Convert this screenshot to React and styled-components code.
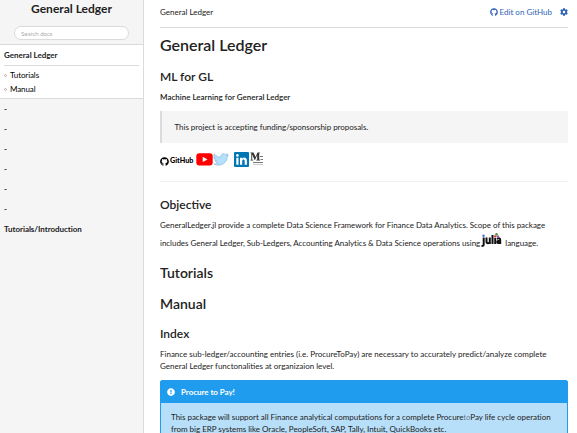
import React from 'react';
import styled, { createGlobalStyle } from 'styled-components';
import { FaCog, FaGithub, FaExclamationCircle } from 'react-icons/fa';

const GlobalStyle = createGlobalStyle`
  *, *::before { box-sizing: border-box; }
  body { margin: 0; overflow: hidden; background: #fff; }
`;

const Page = styled.div`
  display: flex;
  width: 577px;
  height: 433px;
  overflow: hidden;
  font: 400 8px/12px Lato, sans-serif;
  color: #222;
`;

const Sidebar = styled.aside`
  width: 144px;
  flex: none;
  background: #f5f5f5;
  border-right: 1px solid #dbdbdb;
`;

const SiteTitle = styled.div`
  height: 19px;
  line-height: 18px;
  font-size: 12px;
  font-weight: 700;
  text-align: center;
`;

const Search = styled.input`
  display: block;
  width: 115px;
  height: 14px;
  margin: 7px 0 4px 14px;
  padding: 0 6px;
  border: 1px solid #dbdbdb;
  border-radius: 7px;
  background: #fff;
  font: 400 6px/12px Lato, sans-serif;
  outline: none;
  &::placeholder { color: #aaa; opacity: 1; }
`;

const CurrentSection = styled.nav`
  height: 55px;
  padding: 0 4px;
  background: #fff;
  border-top: 1px solid #dbdbdb;
  border-bottom: 1px solid #dbdbdb;
`;

const SectionName = styled.div`
  height: 21px;
  line-height: 21px;
  border-bottom: 1px solid #dbdbdb;
  font-weight: 700;
  letter-spacing: -0.03px;
  margin-bottom: 2px;
`;

const SubLink = styled.div`
  display: flex;
  align-items: center;
  height: 14px;
  gap: 3px;
  color: #000;
  letter-spacing: -0.1px;
  &::before {
    content: '';
    width: 3px;
    height: 3px;
    border: 1px solid #c9a9a4;
    border-radius: 50%;
  }
`;

const MenuItem = styled.div`
  height: 20px;
  line-height: 20px;
  padding-left: 4px;
  font-weight: 700;
  letter-spacing: -0.04px;
`;

const Main = styled.main`
  width: 408px;
  margin-left: 16px;
`;

const TopBar = styled.header`
  display: flex;
  justify-content: space-between;
  align-items: center;
  height: 28px;
  padding-bottom: 3px;
  border-bottom: 1px solid #dbdbdb;
`;

const Actions = styled.div`
  display: flex;
  align-items: center;
  color: #2e63b8;
  svg:last-child { margin-left: 8px; }
  svg:first-child { margin-right: 2px; }
`;

const Heading = styled.h2`
  margin: 0;
  height: ${p => p.$h}px;
  line-height: ${p => p.$lh || p.$h}px;
  font-size: ${p => p.$size}px;
  font-weight: 600;
`;

const Quote = styled.blockquote`
  height: 32px;
  margin: 4px 0 0;
  padding-left: 12.5px;
  line-height: 33px;
  letter-spacing: -0.04px;
  background: #f5f5f5;
  border-left: 2px solid #dbdbdb;
`;

const Badges = styled.div`
  display: flex;
  align-items: center;
  height: 39px;
  padding-bottom: 6px;
  border-bottom: 1px solid #f0f0f0;
  svg { flex: none; }
`;

const GithubMark = styled.span`
  display: flex;
  align-items: center;
  gap: 1px;
  width: 36px;
  padding-top: 4px;
  color: #000;
  font-weight: 900;
  font-size: 7.2px;
`;

const LinkedInLink = styled.span`
  display: flex;
  margin: 0 1px 0 5px;
`;

const Line = styled.div`
  height: ${p => p.$h || 12}px;
  line-height: ${p => p.$h || 12}px;
  letter-spacing: ${p => p.$track || 0}px;
  white-space: nowrap;
  svg { margin: 0 1px 0 1px; vertical-align: -1px; }
  em { font-style: italic; font-weight: 300; }
`;

const Admonition = styled.section`
  height: 80px;
  margin-top: 8px;
  background: #b8dff9;
  border: 1px solid #209cee;
  border-radius: 2px;
`;

const AdmonitionHead = styled.div`
  display: flex;
  align-items: center;
  height: 22px;
  gap: 6px;
  padding-left: 6px;
  background: #209cee;
  color: #fff;
  font-weight: 700;
  letter-spacing: -0.05px;
`;

const AdmonitionBody = styled.div`
  padding: 8px 10px;
`;

const YouTube = () => (
  <svg width="17" height="13" viewBox="0 0 17 13">
    <rect x="0.3" y="0.3" width="16.4" height="12.2" rx="3" fill="#f00" />
    <path d="M6.7 3.7v5.4l4.8-2.7z" fill="#fff" />
  </svg>
);

const Twitter = () => (
  <svg width="16" height="13" viewBox="0 0 24 20">
    <path d="M1.500 1.500C4 4.500 7.500 6.300 11.800 6.500 11 1.500 16 -.5 19.200 2.500L22.500 1.300 21 3.800l2.500-.4L21.500 6C21.500 15 12 22 1 17c3 0 5-.5 6.500-2-2.500 0-4-1.500-4.500-3.500h2C2.500 10.500 1 9 1 6.500l2 .7C.8 5.500.5 3.500 1.500 1.500z" fill="#b5e0fb" stroke="#86b9d8" strokeWidth="1" />
  </svg>
);

const LinkedIn = () => (
  <svg width="15" height="15" viewBox="0 0 15 15">
    <rect width="15" height="15" rx="1" fill="#0077b5" />
    <path d="M2.300 5.700h2.200v7H2.300zM6 5.700h2v1c1.200-2 4.900-1.500 4.900 2v4h-2.200V9.300c0-2.500-2.500-2.300-2.500 0v3.400H6z" fill="#fff" />
    <circle cx="3.400" cy="3.400" r="1.300" fill="#fff" />
  </svg>
);

const Medium = () => (
  <svg width="13" height="14" viewBox="0 0 13 14">
    <path d="M0.500 0.500h3L5.500 5 7.500 0.500h2.300V1.300H9.200V7.700h.9V8.500H6.300V7.700H7.200V3L5 8H4.600L2.200 2.500V7.700h1V8.500H.5V7.700h.8V1.300H.5z" fill="#333" />
    <path d="M10 4.500h3M10.500 7.500H13" stroke="#777" strokeWidth="1" />
    <path d="M3 10.500h10" stroke="#777" strokeWidth="1" />
    <path d="M3 12.500h10" stroke="#ccc" strokeWidth="1" />
  </svg>
);

const Julia = () => (
  <svg width="21" height="14" viewBox="0 0 21 14">
    <g fill="none" stroke="#111" strokeWidth="2">
      <path d="M2.700 4.500v7q0 1.500-2.200 1.500M5.500 4.500v4q0 1.800 1.500 1.800t1.600-1.300M8.800 4.500V11M11.500 2V11M14.200 5V11" />
      <path d="M16 5.900q3.200-1.500 3.200 1v4.100M19 7.800q-2.800 0-2.800 1.300t2.800.6" />
    </g>
    <circle cx="2.500" cy="2.800" r="1.200" fill="#4f69d9" />
    <circle cx="15.500" cy="1.300" r="1.200" fill="#389826" />
    <circle cx="14.200" cy="3.400" r="1.200" fill="#cb3c33" />
    <circle cx="16.900" cy="3.400" r="1.200" fill="#9558b2" />
  </svg>
);

export default function App() {
  return (
    <Page>
      <GlobalStyle />
      <Sidebar>
        <SiteTitle>General Ledger</SiteTitle>
        <Search placeholder="Search docs" />
        <CurrentSection>
          <SectionName>General Ledger</SectionName>
          <SubLink>Tutorials</SubLink>
          <SubLink>Manual</SubLink>
        </CurrentSection>
        {['-', '-', '-', '-', '-', '-', 'Tutorials/Introduction'].map((label, i) => (
          <MenuItem key={i}>{label}</MenuItem>
        ))}
      </Sidebar>
      <Main>
        <TopBar>
          <span>General Ledger</span>
          <Actions><FaGithub size={8} /><span>Edit on GitHub</span><FaCog size={8} /></Actions>
        </TopBar>
        <Heading as="h1" $h={36} $lh={34} $size={16}>General Ledger</Heading>
        <Heading $h={26} $size={12}>ML for GL</Heading>
        <Heading as="h4" $h={17} $lh={15} $size={8}>Machine Learning for General Ledger</Heading>
        <Quote>This project is accepting funding/sponsorship proposals.</Quote>
        <Badges>
          <GithubMark><FaGithub size={9} />GitHub</GithubMark>
          <YouTube /><Twitter /><LinkedInLink><LinkedIn /></LinkedInLink><Medium />
        </Badges>
        <Heading $h={37} $lh={45} $size={12}>Objective</Heading>
        <Line $track={-0.03}>GeneralLedger.jl provide a complete Data Science Framework for Finance Data Analytics. Scope of this package</Line>
        <Line $h={24} $track={-0.03}>includes General Ledger, Sub-Ledgers, Accounting Analytics &amp; Data Science operations using<Julia /> language.</Line>
        <Heading as="h1" $h={36} $size={14}>Tutorials</Heading>
        <Heading as="h1" $h={26} $size={14}>Manual</Heading>
        <Heading $h={31} $lh={34} $size={12}>Index</Heading>
        <Line>Finance sub-ledger/accounting entries (i.e. ProcureToPay) are necessary to accurately predict/analyze complete</Line>
        <Line>General Ledger functonalities at organizaion level.</Line>
        <Admonition>
          <AdmonitionHead><FaExclamationCircle size={8} />Procure to Pay!</AdmonitionHead>
          <AdmonitionBody>
            <Line $track={-0.02}>This package will support all Finance analytical computations for a complete Procure<em>to</em>Pay life cycle operation</Line>
            <Line $track={-0.02}>from big ERP systems like Oracle, PeopleSoft, SAP, Tally, Intuit, QuickBooks etc.</Line>
          </AdmonitionBody>
        </Admonition>
      </Main>
    </Page>
  );
}
